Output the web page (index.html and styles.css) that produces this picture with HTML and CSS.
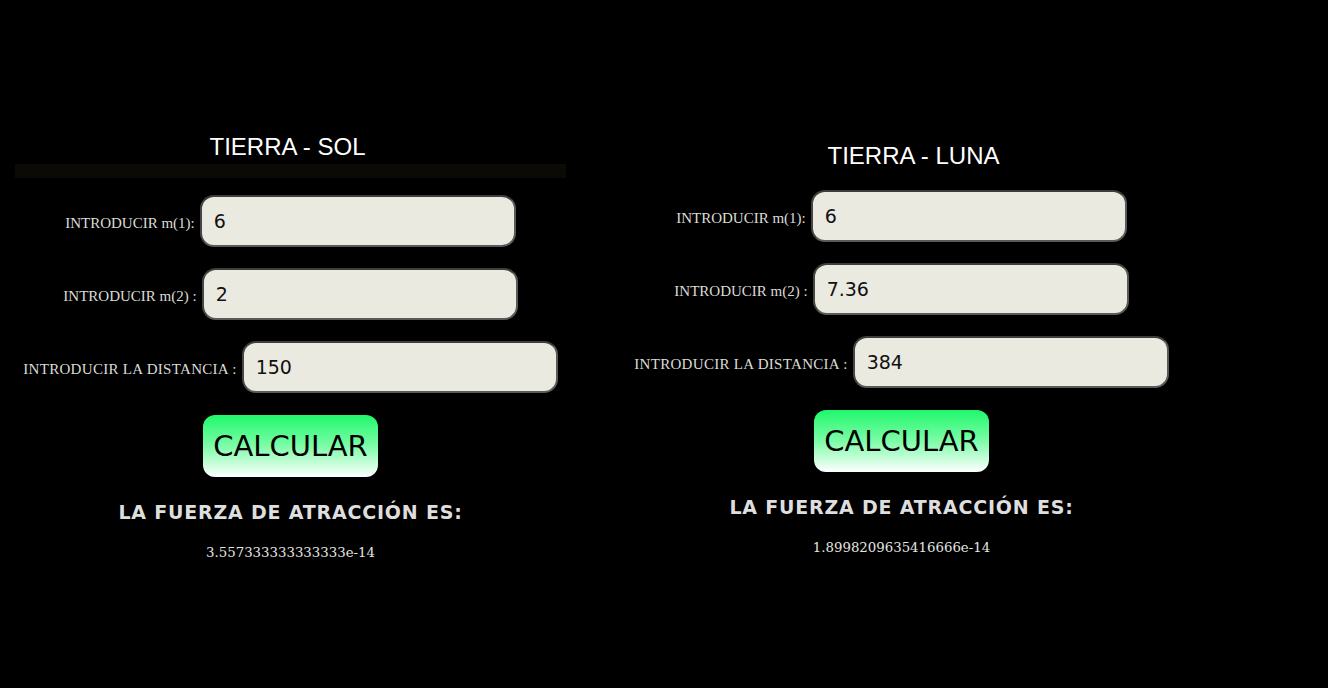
FILE: index.html
```html
<!DOCTYPE html>
<html lang="es">
<head>
<meta charset="utf-8">
<title>Fuerza de atracción</title>
<link rel="stylesheet" href="styles.css">
</head>
<body>
<main class="page">
  <section class="panel panel-sol">
    <h2 class="title title-sol">TIERRA - SOL</h2>
    <div class="bar"></div>
    <div class="rows">
      <div class="row"><label class="lbl">INTRODUCIR m(1):</label><input class="field" type="text" value="6"></div>
      <div class="row"><label class="lbl">INTRODUCIR m(2) :</label><input class="field" type="text" value="2"></div>
      <div class="row"><label class="lbl lbl-wide">INTRODUCIR LA DISTANCIA :</label><input class="field" type="text" value="150"></div>
    </div>
    <button class="btn" type="button">CALCULAR</button>
    <h3 class="res-title">LA FUERZA DE ATRACCIÓN ES:</h3>
    <p class="res">3.557333333333333e-14</p>
  </section>
  <section class="panel panel-luna">
    <h2 class="title title-luna">TIERRA - LUNA</h2>
    <div class="rows">
      <div class="row"><label class="lbl">INTRODUCIR m(1):</label><input class="field" type="text" value="6"></div>
      <div class="row"><label class="lbl">INTRODUCIR m(2) :</label><input class="field" type="text" value="7.36"></div>
      <div class="row"><label class="lbl lbl-wide">INTRODUCIR LA DISTANCIA :</label><input class="field" type="text" value="384"></div>
    </div>
    <button class="btn" type="button">CALCULAR</button>
    <h3 class="res-title">LA FUERZA DE ATRACCIÓN ES:</h3>
    <p class="res">1.8998209635416666e-14</p>
  </section>
</main>
</body>
</html>
```

FILE: styles.css
```css
html, body {
  margin: 0;
  padding: 0;
  background: #000;
  height: 100%;
}
body {
  font-family: "DejaVu Sans", sans-serif;
  color: #fff;
}
.page {
  display: flex;
  padding-left: 15px;
  gap: 60px;
}
.panel {
  width: 551px;
  display: flex;
  flex-direction: column;
  align-items: center;
}
.panel-sol {
  padding-top: 132px;
}
.panel-luna {
  padding-top: 141px;
}
.title {
  margin: 0;
  font-family: "Liberation Sans", Arial, sans-serif;
  font-weight: normal;
  font-size: 24px;
  line-height: 30px;
  color: #fff;
  text-align: center;
}
.title-sol {
  padding-right: 6px;
}
.title-luna {
  padding-left: 24px;
}
.bar {
  align-self: stretch;
  height: 14px;
  margin-top: 2px;
  background: #0c0a04;
}
.rows {
  display: flex;
  flex-direction: column;
  align-items: center;
  gap: 21px;
  margin-top: 17px;
}
.panel-luna .rows {
  margin-top: 19px;
}
.row {
  display: flex;
  align-items: center;
  gap: 5px;
}
.lbl {
  font-family: "Liberation Serif", serif;
  font-size: 15px;
  color: #dcdcd6;
  padding-top: 4px;
}
.lbl-wide {
  letter-spacing: 0.3px;
}
.field {
  box-sizing: border-box;
  width: 316px;
  height: 52px;
  margin: 0;
  padding: 0 0 0 12px;
  border: 2px solid #5a5a58;
  border-top-color: #3e3e3c;
  border-left-color: #464644;
  border-radius: 14px;
  background: #ebeae1;
  font-family: "DejaVu Sans", sans-serif;
  font-size: 19px;
  color: #111;
  outline: none;
}
.btn {
  margin-top: 22px;
  width: 175px;
  height: 62px;
  border: none;
  border-radius: 12px;
  background: linear-gradient(to bottom, #1ff86a 0%, #7dfca8 50%, #ffffff 100%);
  font-family: "DejaVu Sans", sans-serif;
  font-size: 29px;
  color: #000;
  padding: 0;
  cursor: pointer;
}
.res-title {
  margin: 20px 0 0;
  font-family: "DejaVu Sans", sans-serif;
  font-weight: bold;
  font-size: 19px;
  line-height: 30px;
  color: #dedede;
  letter-spacing: 0.8px;
}
.res {
  margin: 18px 0 0;
  font-family: "DejaVu Serif", serif;
  font-size: 13.3px;
  color: #e6e6e0;
}
```
